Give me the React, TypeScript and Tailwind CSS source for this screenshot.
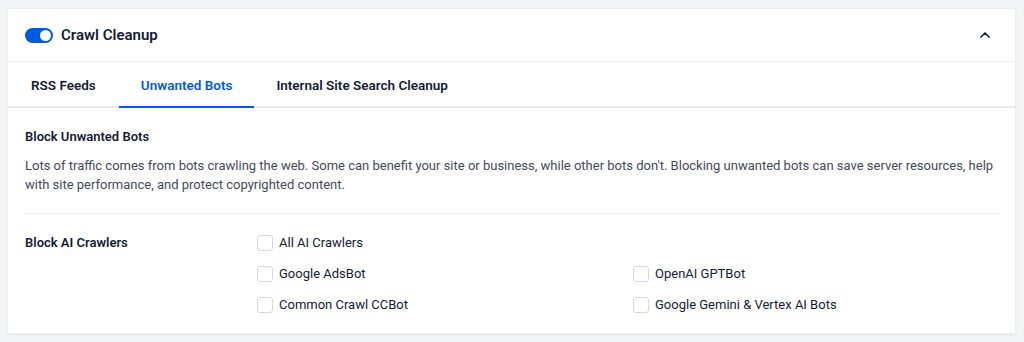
import { ChevronUp } from 'lucide-react'

const bots = [
  { label: 'All AI Crawlers', full: true },
  { label: 'Google AdsBot' },
  { label: 'OpenAI GPTBot' },
  { label: 'Common Crawl CCBot' },
  { label: 'Google Gemini & Vertex AI Bots' },
]

function Checkbox({ label }: { label: string }) {
  return (
    <label className="flex items-center gap-[6px] h-[16px]">
      <span className="w-[16px] h-[16px] rounded-[3px] border border-[#d7d9df] bg-white shrink-0" />
      <span className="text-[13px] text-[#141b38]">{label}</span>
    </label>
  )
}

export default function App() {
  return (
    <div
      className="min-h-[342px] bg-[#f3f4f5] pt-[8px] pl-[7px] pr-[8px] pb-[9px]"
      style={{ fontFamily: 'Roboto, "Liberation Sans", sans-serif' }}
    >
      <div className="bg-white shadow-[0_1px_2px_rgba(0,0,0,0.06)] border border-[#eceef1]">
        {/* Header */}
        <div className="h-[53px] flex items-center justify-between pl-[17px] pr-[22px] border-b border-[#f0f1f3]">
          <div className="flex items-center gap-[8px]">
            <span className="relative w-[28px] h-[15px] rounded-full bg-[#005ae0]">
              <span className="absolute right-[2px] top-[2px] w-[11px] h-[11px] rounded-full bg-white" />
            </span>
            <span className="text-[15px] font-semibold text-[#141b38]">Crawl Cleanup</span>
          </div>
          <ChevronUp className="w-[16px] h-[16px] text-[#141b38]" strokeWidth={2.5} />
        </div>

        {/* Tabs */}
        <div className="flex h-[46px] border-b-2 border-[#e8e9ec] pt-[2px]">
          <div className="px-[23px] flex items-center text-[13.5px] font-semibold text-[#141b38]">RSS Feeds</div>
          <div className="px-[22px] flex items-center text-[13.5px] font-semibold text-[#005ae0] border-b-2 border-[#005ae0] -mb-[2px]">
            Unwanted Bots
          </div>
          <div className="px-[22px] flex items-center text-[13.5px] font-semibold text-[#141b38]">
            Internal Site Search Cleanup
          </div>
        </div>

        {/* Content */}
        <div className="px-[17px] pt-[20px] pb-[20px]">
          <div className="text-[13px] font-semibold text-[#141b38] leading-[18px]">Block Unwanted Bots</div>
          <p className="mt-[10px] text-[13px] leading-[19px] text-[#434960]">
            Lots of traffic comes from bots crawling the web. Some can benefit your site or business, while other bots don't. Blocking unwanted bots can save server resources, help with site performance, and protect copyrighted content.
          </p>
          <div className="mt-[19px] border-t border-[#eceef1]" />
          <div className="flex pt-[21px]">
            <div className="w-[232px] shrink-0 text-[13px] font-semibold text-[#141b38] leading-[16px]">
              Block AI Crawlers
            </div>
            <div className="grid grid-cols-[376px_1fr] gap-y-[15px]">
              {bots.map((b) => (
                <div key={b.label} className={b.full ? 'col-span-2' : ''}>
                  <Checkbox label={b.label} />
                </div>
              ))}
            </div>
          </div>
        </div>
      </div>
    </div>
  )
}
